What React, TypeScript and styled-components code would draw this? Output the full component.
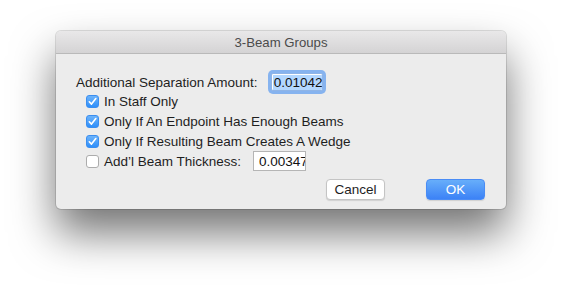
import styled, { createGlobalStyle } from "styled-components";

const GlobalStyle = createGlobalStyle`
  html, body {
    margin: 0;
    padding: 0;
    background: #ffffff;
  }
  body {
    font-family: "Liberation Sans", Arial, sans-serif;
    font-size: 13.5px;
    color: #1e1e1e;
  }
`

const Stage = styled.div`
  width: 562px;
  height: 289px;
  padding: 31px 0 0 56px;
  box-sizing: border-box;
  overflow: hidden;
`

const Window = styled.div`
  width: 450px;
  height: 178px;
  display: flex;
  flex-direction: column;
  background: #ececec;
  border-radius: 5px;
  box-shadow: 0 0 0 1px rgba(0, 0, 0, 0.12), 0 24px 44px rgba(0, 0, 0, 0.55);
  overflow: hidden;
`

const TitleBar = styled.div`
  height: 22px;
  display: flex;
  align-items: center;
  justify-content: center;
  background: linear-gradient(#e9e8e9, #d4d3d4);
  border-bottom: 1px solid #b9b9b9;
  color: #4b4b4b;
  font-size: 13.2px;
`

const Body = styled.div`
  flex: 1;
  display: flex;
  flex-direction: column;
  padding: 19px 21px 9px 20px;
`

const FieldRow = styled.div`
  height: 18px;
  display: flex;
  align-items: center;
`

const CheckRow = styled.div`
  height: 20px;
  display: flex;
  align-items: center;
  margin-left: 10px;
`

const Label = styled.span`
  white-space: nowrap;
`

const Field = styled.div<{ $focused?: boolean; $width: number }>`
  width: ${p => p.$width}px;
  height: ${p => (p.$focused ? 18 : 20)}px;
  margin-left: ${p => (p.$focused ? 13 : 12)}px;
  box-sizing: border-box;
  background: #fff;
  border: 1px solid ${p => (p.$focused ? "#8fb4e6" : "#b5b5b5")};
  box-shadow: ${p => (p.$focused ? "0 0 0 3px rgba(100, 160, 240, 0.75)" : "none")};
  border-radius: ${p => (p.$focused ? "2px" : "0")};
  display: flex;
  align-items: center;
  padding-left: ${p => (p.$focused ? 1 : 5)}px;
  overflow: hidden;
  color: #111;
  white-space: nowrap;
`

const Selected = styled.span`
  background: #b3d7ff;
  padding: 0 1px;
`

const Box = styled.span<{ $checked?: boolean }>`
  width: 13px;
  height: 13px;
  box-sizing: border-box;
  border-radius: 3px;
  margin-right: 5px;
  display: flex;
  align-items: center;
  justify-content: center;
  background: ${p => (p.$checked ? "linear-gradient(#6cb3fa, #2f8ffa)" : "#fff")};
  border: 1px solid ${p => (p.$checked ? "#3a8ef0" : "#acacac")};
  flex-shrink: 0;
`

const Buttons = styled.div`
  margin-top: 8px;
  display: flex;
  justify-content: flex-end;
  gap: 41px;
`

const Button = styled.button<{ $primary?: boolean }>`
  width: 59px;
  height: 21px;
  padding: 0;
  border-radius: 4px;
  font-family: "Liberation Sans", Arial, sans-serif;
  font-size: 13.5px;
  border: 1px solid ${p => (p.$primary ? "#4a8cf5" : "#c4c4c4")};
  background: ${p => (p.$primary ? "linear-gradient(#67aefa, #3c82f6)" : "#fff")};
  color: ${p => (p.$primary ? "#fff" : "#1e1e1e")};
  box-shadow: 0 1px 1px rgba(0, 0, 0, 0.12);
`

function Check({ checked }: { checked?: boolean }) {
  return (
    <Box $checked={checked}>
      {checked && (
        <svg width="9" height="9" viewBox="0 0 9 9">
          <path d="M1.3 4.8 L3.5 7.1 L7.8 1.5" fill="none" stroke="#fff" strokeWidth="1.6" strokeLinecap="round" strokeLinejoin="round" />
        </svg>
      )}
    </Box>
  )
}

export default function App() {
  return (
    <Stage>
      <GlobalStyle />
      <Window>
        <TitleBar>3-Beam Groups</TitleBar>
        <Body>
          <FieldRow>
            <Label>Additional Separation Amount:</Label>
            <Field $focused $width={52}><Selected>0.01042</Selected></Field>
          </FieldRow>
          <CheckRow><Check checked /><Label>In Staff Only</Label></CheckRow>
          <CheckRow><Check checked /><Label>Only If An Endpoint Has Enough Beams</Label></CheckRow>
          <CheckRow><Check checked /><Label>Only If Resulting Beam Creates A Wedge</Label></CheckRow>
          <CheckRow>
            <Check />
            <Label>Add’l Beam Thickness:</Label>
            <Field $width={53}>0.00347</Field>
          </CheckRow>
          <Buttons>
            <Button>Cancel</Button>
            <Button $primary>OK</Button>
          </Buttons>
        </Body>
      </Window>
    </Stage>
  )
}
